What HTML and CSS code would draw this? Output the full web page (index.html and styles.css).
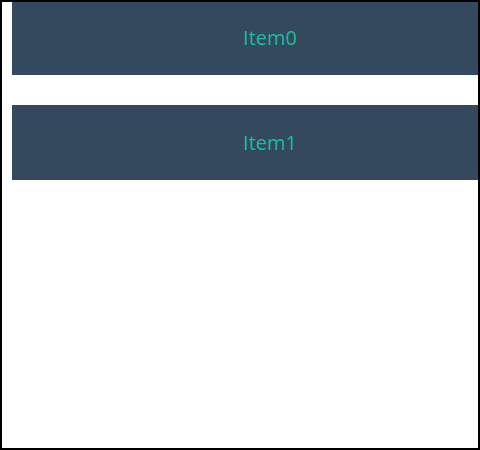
FILE: index.html
```html
<!DOCTYPE html>
<html>
<head>
<meta charset="utf-8">
<link rel="stylesheet" href="styles.css">
</head>
<body>
<div class="frame">
  <div class="list">
    <div class="item">Item0</div>
    <div class="item">Item1</div>
  </div>
</div>
</body>
</html>
```

FILE: styles.css
```css
html, body {
  margin: 0;
  padding: 0;
  background: #fff;
}
.frame {
  width: 480px;
  height: 450px;
  box-sizing: border-box;
  border: 2px solid #000;
  overflow: hidden;
}
.list {
  display: flex;
  flex-direction: column;
  gap: 30px;
  margin-top: -2px;
  padding-left: 10px;
}
.item {
  flex: none;
  width: 516px;
  height: 75px;
  background: #34495e;
  color: #1abc9c;
  font-family: "Open Sans", sans-serif;
  font-size: 20px;
  display: flex;
  align-items: center;
  justify-content: center;
}
```
